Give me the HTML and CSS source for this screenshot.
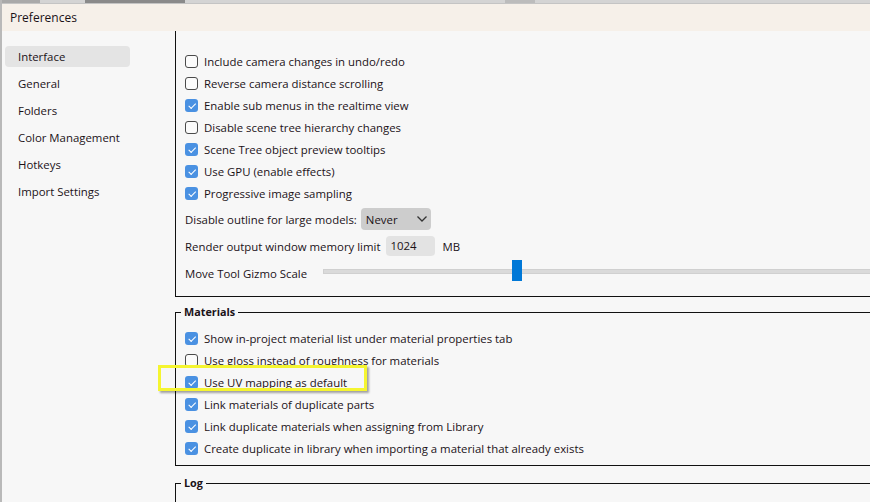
FILE: index.html
```html
<!DOCTYPE html>
<html lang="en">
<head>
    <meta charset="UTF-8">
    <title>Preferences</title>
    <link rel="stylesheet" href="styles.css">
</head>
<body>

    <div class="window">
        <!-- strip of the app behind the dialog -->
        <div class="behind">
            <span class="b1"></span><span class="b2"></span><span class="b3"></span>
        </div>

        <div class="titlebar">Preferences</div>

        <div class="main">
            <!-- Sidebar -->
            <ul class="sidebar">
                <li class="active">Interface</li>
                <li>General</li>
                <li>Folders</li>
                <li>Color Management</li>
                <li>Hotkeys</li>
                <li>Import Settings</li>
            </ul>

            <!-- Settings -->
            <div class="content">
                <div class="groups">
                    <div class="group group-top">
                        <label class="row"><span class="cb"></span>Include camera changes in undo/redo</label>
                        <label class="row"><span class="cb"></span>Reverse camera distance scrolling</label>
                        <label class="row"><span class="cb on"></span>Enable sub menus in the realtime view</label>
                        <label class="row"><span class="cb"></span>Disable scene tree hierarchy changes</label>
                        <label class="row"><span class="cb on"></span>Scene Tree object preview tooltips</label>
                        <label class="row"><span class="cb on"></span>Use GPU (enable effects)</label>
                        <label class="row"><span class="cb on"></span>Progressive image sampling</label>

                        <div class="row row-select">
                            Disable outline for large models:
                            <span class="select">Never
                                <svg width="12" height="8" viewBox="0 0 12 8"><path d="M1.5 1.5 L6 6 L10.5 1.5" fill="none" stroke="#333" stroke-width="1.3"/></svg>
                            </span>
                        </div>
                        <div class="row row-input">
                            Render output window memory limit
                            <span class="field">1024</span>
                            <span class="unit">MB</span>
                        </div>
                        <div class="row row-slider">
                            Move Tool Gizmo Scale
                            <span class="slider"><span class="thumb"></span></span>
                        </div>
                    </div>

                    <fieldset class="group group-mat">
                        <legend>Materials</legend>
                        <label class="row"><span class="cb on"></span>Show in-project material list under material properties tab</label>
                        <label class="row"><span class="cb"></span>Use gloss instead of roughness for materials</label>
                        <label class="row"><span class="cb on"></span>Use UV mapping as default</label>
                        <label class="row"><span class="cb on"></span>Link materials of duplicate parts</label>
                        <label class="row"><span class="cb on"></span>Link duplicate materials when assigning from Library</label>
                        <label class="row"><span class="cb on"></span>Create duplicate in library when importing a material that already exists</label>
                    </fieldset>

                    <fieldset class="group group-log">
                        <legend>Log</legend>
                    </fieldset>
                </div>
            </div>

            <!-- yellow annotation around the UV mapping option -->
            <div class="marker"></div>
        </div>
    </div>

</body>
</html>
```

FILE: styles.css
```css
body {
    margin: 0;
    font-family: "Open Sans", "Noto Sans", sans-serif;
    font-size: 11.4px;
    color: #1b1217;
    background: #f7f7f7;
}
.window {
    height: 502px;
    overflow: hidden;
    border-left: 2px solid #b9b9b9;
    display: flex;
    flex-direction: column;
}
.behind {
    height: 3px;
    display: flex;
    background: #d4d4d4;
    border-bottom: 1px solid #c4c4c4;
}
.behind span { height: 3px; }
.b1 { width: 38px; background: #a9a9a9; }
.b2 { width: 100px; background: #8a8a8a; margin-left: 45px; }
.b3 { width: 30px; background: #bcbcbc; margin-left: 320px; }
.titlebar {
    height: 29px;
    line-height: 27px;
    padding-left: 8px;
    font-size: 12px;
    background: #f6f0e9;
}
.main {
    flex: 1;
    display: flex;
    position: relative;
}
.sidebar {
    list-style: none;
    margin: 0;
    padding: 15px 0 0 3px;
    width: 170px;
}
.sidebar li {
    width: 112px;
    height: 21px;
    line-height: 21px;
    padding-left: 13px;
    margin-bottom: 6px;
    border-radius: 4px;
}
.sidebar li.active {
    background: #e4e4e4;
}
.content {
    flex: 1;
    overflow: hidden;
}
.groups {
    width: 740px;
}
.group {
    border: 1px solid #111;
    margin: 0;
    padding: 0 0 6px 9px;
}
.group-top {
    border-top: none;
    padding-top: 19px;
    padding-bottom: 13px;
}
fieldset.group {
    margin-top: 7px;
    padding-top: 7px;
    min-width: 0;
}
fieldset.group-log {
    margin-top: 9px;
    height: 60px;
}
legend {
    font-weight: bold;
    font-size: 10.8px;
    padding: 0 3px;
    margin-left: -4px;
    line-height: 16px;
}
.row {
    display: flex;
    align-items: center;
    height: 22px;
    white-space: nowrap;
}
.cb {
    box-sizing: border-box;
    width: 13px;
    height: 13px;
    border: 1px solid #4a4a4a;
    border-radius: 3px;
    background: #fbfbfb;
    margin-right: 6px;
    flex: none;
    position: relative;
}
.cb.on {
    border: none;
    background: #4a91e2;
}
.cb.on::after {
    content: "";
    position: absolute;
    left: 3px;
    top: 2px;
    width: 6px;
    height: 3px;
    border-left: 1.5px solid #fff;
    border-bottom: 1.5px solid #fff;
    transform: rotate(-45deg) translate(-1px, 2px);
}
.row-select { margin-top: 4px; }
.select {
    display: inline-flex;
    align-items: center;
    justify-content: space-between;
    box-sizing: border-box;
    width: 70px;
    height: 22px;
    margin-left: 4px;
    padding: 0 3px 0 5px;
    background: #cdcdcd;
    border-radius: 4px;
}
.row-input { margin-top: 6px; height: 20px; }
.field {
    box-sizing: border-box;
    width: 49px;
    height: 20px;
    line-height: 20px;
    margin-left: 6px;
    padding-left: 4px;
    background: #e3e3e3;
    border-radius: 4px;
}
.unit { margin-left: 7px; }
.row-slider { margin-top: 7px; height: 20px; }
.slider {
    position: relative;
    flex: 1;
    height: 3px;
    margin-left: 16px;
    margin-top: -3px;
    background: #dadada;
    border: 1px solid #d0d0d0;
}
.thumb {
    position: absolute;
    left: 188px;
    top: -10px;
    width: 10px;
    height: 21px;
    background: #0078d7;
}
.marker {
    position: absolute;
    left: 156px;
    top: 334px;
    box-sizing: border-box;
    width: 209px;
    height: 26px;
    border: 3px solid #f5f530;
    box-shadow: 2px 2px 2px rgba(0, 0, 0, 0.35);
}
```
